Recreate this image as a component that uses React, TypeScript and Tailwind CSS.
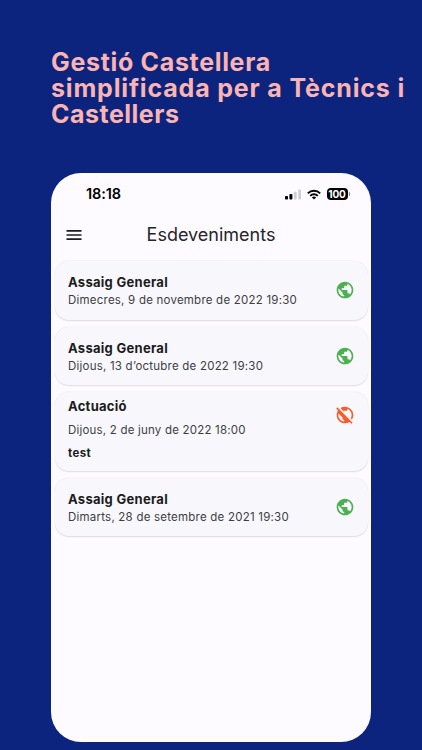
import { MdMenu, MdPublic, MdPublicOff } from "react-icons/md";

type Event = { title: string; date: string; note?: string; open: boolean };

const events: Event[] = [
  { title: "Assaig General", date: "Dimecres, 9 de novembre de 2022 19:30", open: true },
  { title: "Assaig General", date: "Dijous, 13 d’octubre de 2022 19:30", open: true },
  { title: "Actuació", date: "Dijous, 2 de juny de 2022 18:00", note: "test", open: false },
  { title: "Assaig General", date: "Dimarts, 28 de setembre de 2021 19:30", open: true },
];

function StatusBar() {
  return (
    <div className="flex h-[42px] items-center justify-between pr-[21px] pl-[35px] text-black">
      <span className="text-[14.5px] leading-none font-semibold tracking-[-0.1px]">18:18</span>
      <div className="flex items-center">
        <svg width="17" height="11" viewBox="0 0 17 11">
          <rect x="0" y="7" width="3" height="3.6" rx="0.8" />
          <rect x="4.4" y="5" width="3" height="5.6" rx="0.8" />
          <rect x="8.9" y="2.8" width="2.8" height="7.8" rx="0.8" fill="#cfced3" />
          <rect x="13.3" y="0.4" width="2.7" height="10.2" rx="0.8" fill="#cfced3" />
        </svg>
        <svg className="ml-[5px]" width="14" height="11" viewBox="0 0 14 11" fill="none" stroke="#000" strokeWidth="1.9">
          <path d="M0.8 4.3a8.8 8.8 0 0 1 12.4 0" />
          <path d="M3.2 6.8a5.4 5.4 0 0 1 7.6 0" />
          <path d="M7 10.6 4.9 8.5a3 3 0 0 1 4.2 0Z" fill="#000" stroke="none" />
        </svg>
        <span className="ml-[6px] flex h-[12px] w-[21px] items-center justify-center rounded-[4px] bg-black text-[10px] leading-none font-bold tracking-[-0.1px] text-white">
          100
        </span>
        <span className="ml-px h-1 w-[1.5px] rounded-r-full bg-[#88878b]" />
      </div>
    </div>
  );
}

function EventCard({ title, date, note, open }: Event) {
  const Icon = open ? MdPublic : MdPublicOff;
  return (
    <li
      className={`flex justify-between rounded-[14px] bg-[#f8f8fc] pr-[13px] pl-[13px] shadow-[0_0.5px_1.5px_rgba(0,0,0,0.13)] ${
        note ? "h-[78.2px] items-start pt-[5px]" : "h-[58.6px] items-center"
      }`}
    >
      <div className={note ? "" : "pt-[1.2px]"}>
        <h2 className="text-[13px] leading-[18px] font-bold tracking-[0.28px] text-[#1b1b20]">{title}</h2>
        <p className={`text-[11.5px] leading-[18px] text-[#3d3d43] ${note ? "mt-[6px] tracking-[0.2px]" : "tracking-[0.22px]"}`}>{date}</p>
        {note && <p className="mt-[5px] text-[11.5px] leading-[18px] font-bold tracking-[0.38px] text-[#1b1b20]">{note}</p>}
      </div>
      <Icon className={`size-5 ${open ? "mb-[0.5px] text-[#4caf50]" : "mt-[8px] text-[#f95b2b]"}`} />
    </li>
  );
}

export default function App() {
  return (
    <main className="h-[750px] w-[422px] overflow-hidden bg-[#0d247f] pt-[49px] pl-[51px] font-['Inter',sans-serif]">
      <h1 className="h-[124px] text-[25px] leading-[26px] font-bold whitespace-nowrap text-[#fbb4b1]">
        <span className="block tracking-[0.67px]">Gestió Castellera</span>
        <span className="block tracking-[0.83px]">simplificada per a Tècnics i</span>
        <span className="block tracking-[0.5px]">Castellers</span>
      </h1>
      <section className="h-[569px] w-[320px] rounded-[30px] bg-[#fdfbff]">
        <StatusBar />
        <header className="grid h-[46px] grid-cols-[48px_1fr_48px] items-center pb-[6px]">
          <MdMenu className="ml-[13px] size-5 text-[#1b1b20]" />
          <h2 className="text-center text-[18px] leading-6 text-[#25252a]">Esdeveniments</h2>
        </header>
        <ul className="flex flex-col gap-[7.1px] pr-[3px] pl-1">
          {events.map((event) => (
            <EventCard key={event.date} {...event} />
          ))}
        </ul>
      </section>
    </main>
  );
}
